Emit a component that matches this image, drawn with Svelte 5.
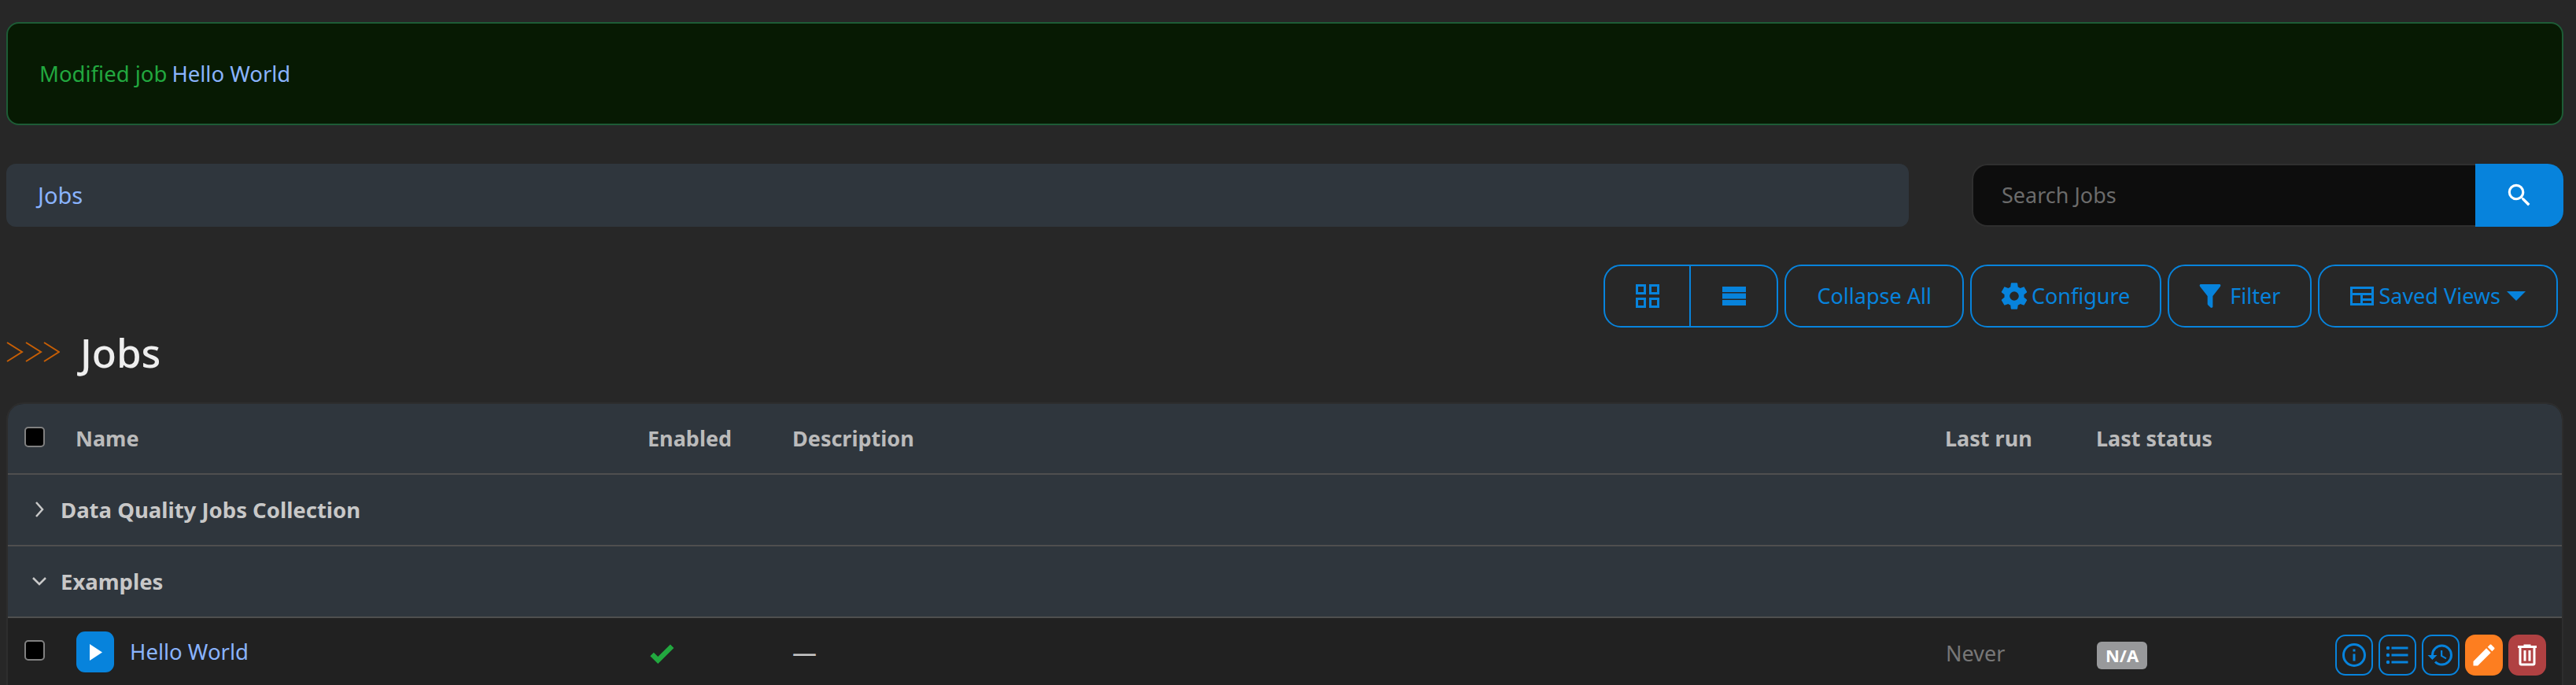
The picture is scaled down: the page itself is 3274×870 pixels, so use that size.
<script>
  // table columns, widths measured from the header text positions
  const columns = [
    { label: 'Name', width: 727 },
    { label: 'Enabled', width: 184 },
    { label: 'Description', width: 1465 },
    { label: 'Last run', width: 192 },
    { label: 'Last status', width: 260 }
  ];

  const icons = {
    search: 'M9.5,3A6.5,6.5 0 0,1 16,9.5C16,11.11 15.41,12.59 14.44,13.73L14.71,14H15.5L20.5,19L19,20.5L14,15.5V14.71L13.73,14.44C12.59,15.41 11.11,16 9.5,16A6.5,6.5 0 0,1 3,9.5A6.5,6.5 0 0,1 9.5,3M9.5,5C7,5 5,7 5,9.5C5,12 7,14 9.5,14C12,14 14,12 14,9.5C14,7 12,5 9.5,5Z',
    cog: 'M12,15.5A3.5,3.5 0 0,1 8.5,12A3.5,3.5 0 0,1 12,8.5A3.5,3.5 0 0,1 15.5,12A3.5,3.5 0 0,1 12,15.5M19.43,12.97C19.47,12.65 19.5,12.33 19.5,12C19.5,11.67 19.47,11.34 19.43,11L21.54,9.37C21.73,9.22 21.78,8.95 21.66,8.73L19.66,5.27C19.54,5.05 19.27,4.96 19.05,5.05L16.56,6.05C16.04,5.66 15.5,5.32 14.87,5.07L14.5,2.42C14.46,2.18 14.25,2 14,2H10C9.75,2 9.54,2.18 9.5,2.42L9.13,5.07C8.5,5.32 7.96,5.66 7.44,6.05L4.95,5.05C4.73,4.96 4.46,5.05 4.34,5.27L2.34,8.73C2.21,8.95 2.27,9.22 2.46,9.37L4.57,11C4.53,11.34 4.5,11.67 4.5,12C4.5,12.33 4.53,12.65 4.57,12.97L2.46,14.63C2.27,14.78 2.21,15.05 2.34,15.27L4.34,18.73C4.46,18.95 4.73,19.03 4.95,18.95L7.44,17.94C7.96,18.34 8.5,18.68 9.13,18.93L9.5,21.58C9.54,21.82 9.75,22 10,22H14C14.25,22 14.46,21.82 14.5,21.58L14.87,18.93C15.5,18.67 16.04,18.34 16.56,17.94L19.05,18.95C19.27,19.03 19.54,18.95 19.66,18.73L21.66,15.27C21.78,15.05 21.73,14.78 21.54,14.63L19.43,12.97Z',
    filter: 'M14,12V19.88C14.04,20.18 13.94,20.5 13.71,20.71C13.32,21.1 12.69,21.1 12.3,20.71L10.29,18.7C10.06,18.47 9.96,18.16 10,17.87V12H9.97L4.21,4.62C3.87,4.19 3.95,3.56 4.38,3.22C4.57,3.08 4.78,3 5,3V3H19V3C19.22,3 19.43,3.08 19.62,3.22C20.05,3.56 20.13,4.19 19.79,4.62L14.03,12H14Z',
    info: 'M11,9H13V7H11M12,20C7.59,20 4,16.41 4,12C4,7.59 7.59,4 12,4C16.41,4 20,7.59 20,12C20,16.41 16.41,20 12,20M12,2A10,10 0 0,0 2,12A10,10 0 0,0 12,22A10,10 0 0,0 22,12A10,10 0 0,0 12,2M11,17H13V11H11V17Z',
    list: 'M7,5H21V7H7V5M7,13V11H21V13H7M4,4.5A1.5,1.5 0 0,1 5.5,6A1.5,1.5 0 0,1 4,7.5A1.5,1.5 0 0,1 2.5,6A1.5,1.5 0 0,1 4,4.5M4,10.5A1.5,1.5 0 0,1 5.5,12A1.5,1.5 0 0,1 4,13.5A1.5,1.5 0 0,1 2.5,12A1.5,1.5 0 0,1 4,10.5M7,19V17H21V19H7M4,16.5A1.5,1.5 0 0,1 5.5,18A1.5,1.5 0 0,1 4,19.5A1.5,1.5 0 0,1 2.5,18A1.5,1.5 0 0,1 4,16.5Z',
    history: 'M13.5,8H12V13L16.28,15.54L17,14.33L13.5,12.25V8M13,3A9,9 0 0,0 4,12H1L4.96,16.03L9,12H6A7,7 0 0,1 13,5A7,7 0 0,1 20,12A7,7 0 0,1 13,19C11.07,19 9.32,18.21 8.06,16.94L6.64,18.36C8.27,20 10.5,21 13,21A9,9 0 0,0 22,12A9,9 0 0,0 13,3',
    pencil: 'M20.71,7.04C21.1,6.65 21.1,6 20.71,5.63L18.37,3.29C18,2.9 17.35,2.9 16.96,3.29L15.12,5.12L18.87,8.87M3,17.25V21H6.75L17.81,9.93L14.06,6.18L3,17.25Z',
    trash: 'M9,3V4H4V6H5V19A2,2 0 0,0 7,21H17A2,2 0 0,0 19,19V6H20V4H15V3H9M7,6H17V19H7V6M9,8V17H11V8H9M13,8V17H15V8H13Z',
    check: 'M9,20.42L2.79,14.21L5.62,11.38L9,14.77L18.88,4.88L21.71,7.71L9,20.42Z'
  };

  const actions = [
    { icon: 'info', kind: 'outline' },
    { icon: 'list', kind: 'outline' },
    { icon: 'history', kind: 'outline' },
    { icon: 'pencil', kind: 'warn' },
    { icon: 'trash', kind: 'danger' }
  ];
</script>

<div class="page">
  <div class="alert">
    <span>Modified job</span> <a href="#job">Hello World</a>
  </div>

  <div class="crumbs-row">
    <nav class="crumbs"><a href="#jobs">Jobs</a></nav>
    <form class="search" onsubmit={(e) => e.preventDefault()}>
      <input type="text" placeholder="Search Jobs" />
      <button type="submit" aria-label="Search">
        <svg class="ico-search" viewBox="0 0 24 24"><path d={icons.search} /></svg>
      </button>
    </form>
  </div>

  <div class="title-row">
    <h1>
      <svg class="arrows" viewBox="0 0 68 26">
        <polyline points="1,1 20,13 1,25" />
        <polyline points="25,1 44,13 25,25" />
        <polyline points="48,1 67,13 48,25" />
      </svg>
      <span>Jobs</span>
    </h1>

    <div class="toolbar">
      <div class="btn-group">
        <button class="btn square" aria-label="Card view">
          <svg class="ico-30" viewBox="0 0 30 30">
            <path d="M0 0h13v13H0zM3 3v7h7V3zM17 0h13v13H17zM20 3v7h7V3zM0 17h13v13H0zM3 20v7h7v-7zM17 17h13v13H17zM20 20v7h7v-7z" fill-rule="evenodd" />
          </svg>
        </button>
        <button class="btn square" aria-label="Table view">
          <svg class="ico-30" viewBox="0 0 30 24">
            <rect width="30" height="7" /><rect y="8.5" width="30" height="7" /><rect y="17" width="30" height="7" />
          </svg>
        </button>
      </div>
      <button class="btn collapse">Collapse All</button>
      <button class="btn icon-btn"><svg class="ico-cog" viewBox="0 0 24 24"><path d={icons.cog} /></svg>Configure</button>
      <button class="btn icon-btn"><svg class="ico-filter" viewBox="0 0 24 24"><path d={icons.filter} /></svg>Filter</button>
      <button class="btn icon-btn saved">
        <svg class="ico-30" viewBox="0 0 30 24">
          <path d="M0 0h30v24H0zM3 3v5h24V3zM3 11v10h10V11zM16 11v4h11v-4zM16 18v3h11v-3z" fill-rule="evenodd" />
        </svg>
        Saved Views
        <span class="caret"></span>
      </button>
    </div>
  </div>

  <div class="table-wrap">
    <table>
      <colgroup>
        <col class="col-check" />
        {#each columns as col}
          <col style="width: {col.width}px" />
        {/each}
        <col />
      </colgroup>
      <thead>
        <tr>
          <th class="check"><span class="checkbox"></span></th>
          {#each columns as col}
            <th>{col.label}</th>
          {/each}
          <th></th>
        </tr>
      </thead>
      <tbody>
        <tr class="group">
          <td colspan="7">
            <svg class="chev" viewBox="0 0 20 20"><polyline points="6,1 14,10 6,19" /></svg>
            Data Quality Jobs Collection
          </td>
        </tr>
        <tr class="group">
          <td colspan="7">
            <svg class="chev" viewBox="0 0 20 20"><polyline points="2,6 10,14 18,6" /></svg>
            Examples
          </td>
        </tr>
        <tr class="job">
          <td class="check"><span class="checkbox"></span></td>
          <td>
            <div class="name-cell">
              <button class="run" aria-label="Run">
                <svg viewBox="0 0 16 21"><polygon points="0,0 16,10.5 0,21" /></svg>
              </button>
              <a href="#job">Hello World</a>
            </div>
          </td>
          <td><svg class="ico-check" viewBox="2 4 20 17"><path d={icons.check} /></svg></td>
          <td class="dash">—</td>
          <td class="muted">Never</td>
          <td><span class="badge">N/A</span></td>
          <td>
            <div class="actions">
              {#each actions as a}
                <button class="act {a.kind}" aria-label={a.icon}>
                  <svg viewBox="0 0 24 24"><path d={icons[a.icon]} /></svg>
                </button>
              {/each}
            </div>
          </td>
        </tr>
      </tbody>
    </table>
  </div>
</div>

<style>
  :global(body) {
    margin: 0;
    background: #272727;
  }

  .page {
    height: 870px;
    overflow: hidden;
    box-sizing: border-box;
    padding: 28px 16px 0 8px;
    font-family: "Noto Sans", "Open Sans", sans-serif;
    font-size: 27px;
    line-height: 1.4;
    color: #c8c8c8;
  }

  a {
    color: #8ab4ff;
    text-decoration: none;
  }

  svg {
    fill: currentColor;
    display: block;
    flex: none;
  }

  .alert {
    box-sizing: border-box;
    height: 131px;
    display: flex;
    align-items: center;
    gap: 6px;
    padding: 2px 40px 0;
    background: #071a03;
    border: 2px solid #1d5c36;
    border-radius: 16px;
    color: #22a83f;
    margin-bottom: 49px;
    font-size: 27.5px;
  }

  .crumbs-row {
    display: flex;
    justify-content: space-between;
    margin-bottom: 48px;
  }

  .crumbs {
    width: 2418px;
    height: 80px;
    box-sizing: border-box;
    display: flex;
    align-items: center;
    padding-left: 40px;
    background: #2f363d;
    border-radius: 12px;
    font-size: 29px;
  }

  .search {
    display: flex;
    width: 752px;
    height: 80px;
  }

  .search input {
    flex: 1;
    min-width: 0;
    box-sizing: border-box;
    padding: 0 36px;
    background: #0d0d0d;
    border: 2px solid #2f2f2f;
    border-right: none;
    border-radius: 20px 0 0 20px;
    font: inherit;
    color: #ddd;
    outline: none;
  }

  .search input::placeholder {
    color: #6b6b6b;
    opacity: 1;
  }

  .search button {
    width: 112px;
    border: none;
    padding: 0;
    background: #0783dc;
    border-radius: 0 20px 20px 0;
    color: #fff;
    display: flex;
    align-items: center;
    justify-content: center;
  }

  .ico-search {
    width: 38px;
    height: 38px;
  }

  .title-row {
    height: 175px;
    display: flex;
    justify-content: space-between;
    align-items: flex-start;
    padding-right: 7px;
  }

  h1 {
    align-self: flex-end;
    margin: 0 0 37px;
    display: flex;
    align-items: center;
    gap: 26px;
    font-size: 51px;
    font-weight: 500;
    line-height: 54px;
    color: #eee;
  }

  .arrows {
    width: 68px;
    height: 26px;
    fill: none;
    stroke: #c85f05;
    stroke-width: 2;
  }

  .toolbar {
    display: flex;
    gap: 8px;
  }

  .btn {
    height: 80px;
    box-sizing: border-box;
    padding: 0 38px;
    display: flex;
    align-items: center;
    background: transparent;
    border: 2px solid #0783dc;
    border-radius: 22px;
    color: #0783dc;
    font: inherit;
    white-space: nowrap;
  }

  .collapse {
    padding: 0 39px;
  }

  .icon-btn {
    gap: 6px;
  }

  .saved {
    padding: 0 39px;
  }

  .btn-group {
    display: flex;
  }

  .btn.square {
    width: 111px;
    padding: 0;
    justify-content: center;
  }

  .btn-group .btn:first-child {
    border-radius: 22px 0 0 22px;
  }

  .btn-group .btn:last-child {
    border-left: none;
    border-radius: 0 22px 22px 0;
  }

  .ico-30 {
    width: 30px;
  }

  .ico-cog {
    width: 40px;
    height: 40px;
    margin: 0 -4px;
  }

  .ico-filter {
    width: 40px;
    height: 40px;
    margin: 0 -1px 0 -6px;
  }

  .caret {
    width: 0;
    height: 0;
    margin-left: 2px;
    border-left: 12px solid transparent;
    border-right: 12px solid transparent;
    border-top: 12px solid currentColor;
  }

  .table-wrap {
    border: 2px solid #2d2d2d;
    border-radius: 22px;
    overflow: hidden;
    background: #212121;
  }

  table {
    width: 100%;
    table-layout: fixed;
    border-collapse: separate;
    border-spacing: 0;
  }

  .col-check {
    width: 67px;
  }

  th {
    height: 88px;
    padding: 0 19px 0 19px;
    background: #2f363d;
    border-bottom: 2px solid #4f4f4f;
    box-sizing: content-box;
    text-align: left;
    font-weight: 700;
    color: #bbb;
  }

  th.check,
  td.check {
    padding: 0 0 0 21px;
  }

  .checkbox {
    display: block;
    box-sizing: border-box;
    width: 26px;
    height: 26px;
    background: #000;
    border: 2px solid #808080;
    border-radius: 5px;
  }

  th .checkbox {
    margin-top: -4px;
  }

  .group td {
    height: 88px;
    background: #2f363d;
    border-bottom: 2px solid #4f4f4f;
    padding: 1px 0 0 67px;
    font-size: 27.5px;
    font-weight: 700;
    color: #c8c8c8;
    position: relative;
  }

  .chev {
    position: absolute;
    left: 30px;
    top: 50%;
    width: 20px;
    height: 20px;
    margin-top: -11px;
    fill: none;
    stroke: #c8c8c8;
    stroke-width: 2.5;
  }

  .job td {
    height: 85px;
    padding: 0 20px;
    vertical-align: top;
    color: #c8c8c8;
  }

  .job td > * {
    margin-top: 17px;
  }

  .name-cell {
    display: flex;
    align-items: center;
    gap: 20px;
    font-size: 27.5px;
  }

  .run {
    width: 48px;
    height: 52px;
    padding: 0;
    border: none;
    border-radius: 11px;
    background: #0783dc;
    color: #fff;
    display: flex;
    align-items: center;
    justify-content: center;
  }

  .run svg {
    width: 16px;
    height: 21px;
    margin-left: 2px;
  }

  .ico-check {
    width: 34px;
    height: 27px;
    color: #22a83f;
    margin-top: 32px !important;
  }

  .job td.dash {
    padding: 22px 19px 0;
    font-size: 31px;
  }

  .job td.muted {
    padding-top: 26px;
    color: #777;
  }

  .job td.check {
    padding: 28px 0 0 21px;
  }

  .job td.check .checkbox {
    margin-top: 0;
  }

  .badge {
    display: inline-block;
    margin-top: 30px !important;
    width: 64px;
    height: 35px;
    line-height: 35px;
    text-align: center;
    background: #98999b;
    border-radius: 6px;
    color: #fff;
    font-size: 22px;
    font-weight: 700;
  }

  .actions {
    display: flex;
    justify-content: flex-end;
    gap: 7px;
    margin-top: 21px !important;
  }

  .act {
    width: 48px;
    height: 52px;
    box-sizing: border-box;
    padding: 0;
    border: 2px solid transparent;
    border-radius: 13px;
    display: flex;
    align-items: center;
    justify-content: center;
    color: #fff;
  }

  .act svg {
    width: 36px;
    height: 36px;
  }

  .act.outline {
    background: transparent;
    border-color: #0783dc;
    color: #0783dc;
  }

  .act.warn {
    background: #fd7e20;
  }

  .act.danger {
    background: #b04142;
  }
</style>
